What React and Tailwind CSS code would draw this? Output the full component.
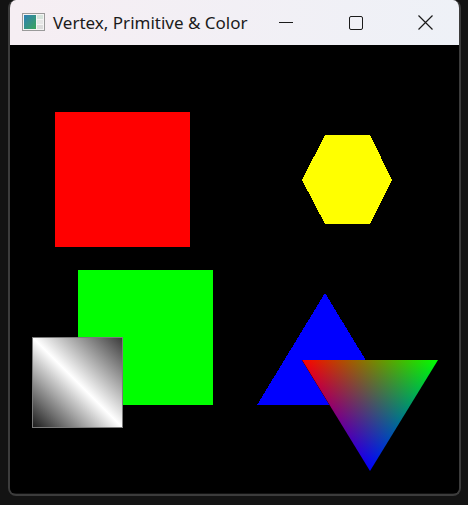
import React from 'react';

const AppIcon = () => (
  <svg width="23" height="18" viewBox="0 0 23 18">
    <defs>
      <linearGradient id="ic" x1="0" y1="0" x2="1" y2="1">
        <stop offset="0" stopColor="#2f7fb8" />
        <stop offset="1" stopColor="#3aa55a" />
      </linearGradient>
    </defs>
    <rect x="0.5" y="0.5" width="22" height="17" fill="#f4f4f4" stroke="#9a9a9a" />
    <rect x="2" y="2" width="12" height="14" fill="url(#ic)" />
    <rect x="15" y="2" width="6" height="4" fill="#d6e4dc" />
    <rect x="15" y="7" width="6" height="4" fill="#e6e6e6" />
    <rect x="15" y="12" width="6" height="4" fill="#dcdcdc" />
  </svg>
);

const Scene = () => (
  <svg width="449" height="448" viewBox="10 45 449 448" className="block">
    <defs>
      <linearGradient id="gray" x1="1" y1="0" x2="0" y2="1">
        <stop offset="0" stopColor="#3a3a3a" />
        <stop offset="0.5" stopColor="#ffffff" />
        <stop offset="1" stopColor="#1a1a1a" />
      </linearGradient>
      <linearGradient id="gr" gradientUnits="userSpaceOnUse" x1="302" y1="360" x2="400.9" y2="420.6">
        <stop offset="0" stopColor="#ff0000" />
        <stop offset="1" stopColor="#000000" />
      </linearGradient>
      <linearGradient id="gg" gradientUnits="userSpaceOnUse" x1="438" y1="360" x2="339.1" y2="420.6">
        <stop offset="0" stopColor="#00ff00" />
        <stop offset="1" stopColor="#000000" />
      </linearGradient>
      <linearGradient id="gb" gradientUnits="userSpaceOnUse" x1="370" y1="471" x2="370" y2="360">
        <stop offset="0" stopColor="#0000ff" />
        <stop offset="1" stopColor="#000000" />
      </linearGradient>
    </defs>
    <rect x="10" y="45" width="449" height="448" fill="#000" />
    <g shapeRendering="crispEdges">
      <rect x="55" y="112" width="135" height="135" fill="#ff0000" />
      <rect x="78" y="270" width="135" height="135" fill="#00ff00" />
      <rect x="32.5" y="337.5" width="90" height="90" fill="url(#gray)" stroke="#7a7a7a" strokeWidth="1" />
      <polygon points="325,135 370,135 392,180 370,224 325,224 302,180" fill="#ffff00" />
      <polygon points="325,293 257,405 393,405" fill="#0000ff" />
    </g>
    <g style={{ isolation: 'isolate' }}>
      <polygon points="302,360 438,360 370,471" fill="#000" />
      <polygon points="302,360 438,360 370,471" fill="url(#gr)" style={{ mixBlendMode: 'screen' }} />
      <polygon points="302,360 438,360 370,471" fill="url(#gg)" style={{ mixBlendMode: 'screen' }} />
      <polygon points="302,360 438,360 370,471" fill="url(#gb)" style={{ mixBlendMode: 'screen' }} />
    </g>
  </svg>
);

export default function App() {
  return (
    <div className="w-[468px] h-[505px] bg-[#131313] pl-[8px]">
      <div className="w-[453px] h-[496px] flex flex-col rounded-[8px] overflow-hidden border-2 border-t-0 border-[#3c3c3c]">
        <div
          className="h-[45px] flex items-center bg-gradient-to-r from-[#f6eef3] to-[#eef1f7] text-[#1b1b1b]"
          style={{ fontFamily: '"Noto Sans", "Open Sans", sans-serif' }}
        >
          <div className="ml-[12px] mt-[-2px] flex">
            <AppIcon />
          </div>
          <span className="ml-[8px] text-[17px] leading-none">Vertex, Primitive &amp; Color</span>
          <div className="ml-auto flex h-full">
            <div className="w-[70px] flex items-center justify-center">
              <div className="w-[14px] h-[1px] bg-[#1b1b1b]" />
            </div>
            <div className="w-[70px] flex items-center justify-center">
              <div className="w-[14px] h-[14px] border-[1.3px] border-[#1b1b1b] rounded-[2px]" />
            </div>
            <div className="w-[68px] flex items-center justify-center">
              <svg width="15" height="15" viewBox="0 0 15 15">
                <path d="M0.5 0.5 L14.5 14.5 M14.5 0.5 L0.5 14.5" stroke="#1b1b1b" strokeWidth="1.2" />
              </svg>
            </div>
          </div>
        </div>
        <Scene />
      </div>
    </div>
  );
}
